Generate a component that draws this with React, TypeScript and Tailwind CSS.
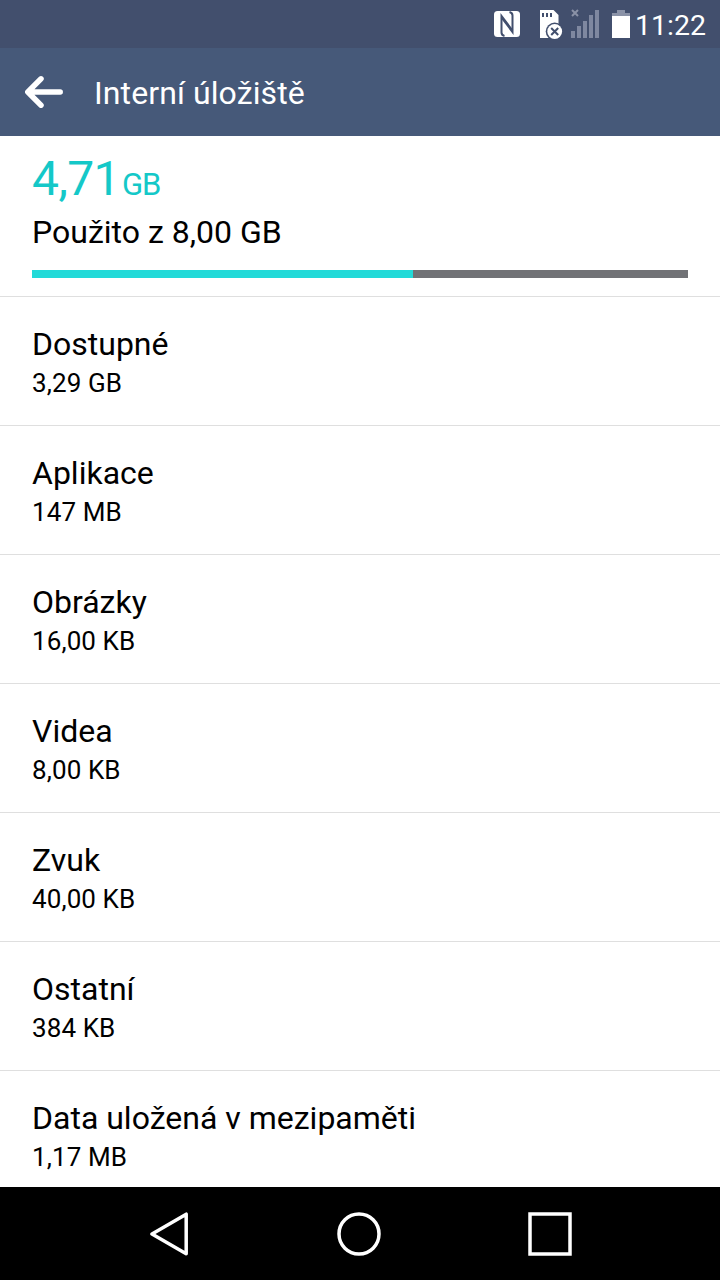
interface StorageItem {
  label: string
  size: string
}

const items: StorageItem[] = [
  { label: "Dostupné", size: "3,29 GB" },
  { label: "Aplikace", size: "147 MB" },
  { label: "Obrázky", size: "16,00 KB" },
  { label: "Videa", size: "8,00 KB" },
  { label: "Zvuk", size: "40,00 KB" },
  { label: "Ostatní", size: "384 KB" },
  { label: "Data uložená v mezipaměti", size: "1,17 MB" },
]

function NfcIcon() {
  return (
    <svg width="26" height="26" viewBox="0 0 26 26" fill="none">
      <rect width="26" height="26" rx="3.5" fill="#fff" />
      <path d="M10.5 25C8.5 24.5 7.5 23.5 7.5 21.5V5L18.5 19.5" stroke="#424f6d" strokeWidth="2" />
      <path d="M15.5 1C17.5 1.5 18.5 2.5 18.5 4.5V21L7.5 6.5" stroke="#424f6d" strokeWidth="2" />
    </svg>
  )
}

function SdCardIcon() {
  return (
    <svg width="23" height="29" viewBox="0 0 23 29" fill="none">
      <path d="M0 0H13.5L18.5 5V28H0Z" fill="#fff" />
      <path d="M3 3V7M7 3V7M11 3V7" stroke="#424f6d" strokeWidth="2" />
      <circle cx="14.7" cy="21.5" r="9" fill="#424f6d" />
      <circle cx="14.7" cy="21.5" r="7.4" fill="#fff" />
      <path d="M11.2 18L18.2 25M18.2 18L11.2 25" stroke="#424f6d" strokeWidth="2" />
    </svg>
  )
}

function SignalIcon() {
  return (
    <svg width="28" height="29" viewBox="0 0 28 29" fill="#7f88a0">
      <path d="M1 1L7 7M7 1L1 7" stroke="#8a92a7" strokeWidth="2" />
      <rect x="0" y="22" width="4" height="7" />
      <rect x="6" y="17" width="4" height="12" />
      <rect x="12" y="12" width="4" height="17" />
      <rect x="18" y="6" width="4" height="23" />
      <rect x="24" y="1" width="4" height="28" />
    </svg>
  )
}

function BatteryIcon() {
  return (
    <svg width="18" height="28" viewBox="0 0 18 28">
      <path d="M5 0H13V3H18V6H0V3H5Z" fill="#8a92a7" />
      <rect y="6" width="18" height="22" fill="#fff" />
    </svg>
  )
}

function StatusBar() {
  return (
    <div className="flex h-12 shrink-0 items-start bg-[#424f6d] pl-[494px] text-white">
      <div className="mt-[11px]"><NfcIcon /></div>
      <div className="mt-2.5 ml-5"><SdCardIcon /></div>
      <div className="mt-[9px] ml-2"><SignalIcon /></div>
      <div className="mt-2.5 ml-[13px]"><BatteryIcon /></div>
      <span className="mt-[9px] ml-[5px] text-[28.5px] leading-[34px] whitespace-nowrap">11:22</span>
    </div>
  )
}

function Header() {
  return (
    <header className="flex h-[88px] shrink-0 items-center bg-[#465979] pl-6 text-white">
      <svg width="40" height="34" viewBox="0 0 40 34" fill="none" stroke="#fff" strokeWidth="5.5" strokeLinecap="round" strokeLinejoin="round">
        <path d="M17 3.8L3.8 17L17 30.2M4 17H36.2" />
      </svg>
      <h1 className="ml-[30px] pt-0.5 text-[32px] leading-[38px] tracking-[0.1px]">Interní úložiště</h1>
    </header>
  )
}

function NavBar() {
  return (
    <nav className="flex h-[93px] shrink-0 items-center bg-black pt-px pl-[149px]">
      <svg width="40" height="44" viewBox="0 0 40 44" fill="none" stroke="#fff" strokeWidth="3.5" strokeLinejoin="round">
        <path d="M37.2 2.2V41.8L3 22Z" />
      </svg>
      <svg className="ml-[148px]" width="44" height="44" viewBox="0 0 44 44" fill="none" stroke="#fff" strokeWidth="3.5">
        <circle cx="22" cy="22" r="20" />
      </svg>
      <svg className="ml-[147px]" width="44" height="44" viewBox="0 0 44 44" fill="none" stroke="#fff" strokeWidth="3.5">
        <rect x="2" y="2" width="40" height="40" />
      </svg>
    </nav>
  )
}

export default function App() {
  return (
    <main className="flex h-[1280px] w-[720px] flex-col overflow-hidden bg-white font-[Roboto,sans-serif] text-black">
      <StatusBar />
      <Header />

      <div className="min-h-0 flex-1 overflow-hidden">
        <section className="h-[161px] border-b border-[#dfdfdf] px-8 pt-[15px]">
          <p className="flex h-14 items-baseline leading-[56px] text-[#14c8c8]">
            <span className="text-[48px] tracking-[-0.6px]">4,71</span>
            <span className="ml-0.5 text-[31px] tracking-[-1.2px]">GB</span>
          </p>
          <p className="mt-1.5 text-[32px] leading-[38px]">Použito z 8,00 GB</p>
          <div className="mt-[19px] h-2 bg-[#717276]">
            <div className="h-full w-[381px] bg-[#22dad8]" />
          </div>
        </section>

        <ul>
          {items.map((item) => (
            <li key={item.label} className="h-[129px] border-b border-[#dfdfdf] px-8 pt-7">
              <p className="text-[32px] leading-[38px]">{item.label}</p>
              <p className="mt-1 text-[26px] leading-8 tracking-[0.1px]">{item.size}</p>
            </li>
          ))}
        </ul>
      </div>

      <NavBar />
    </main>
  )
}
